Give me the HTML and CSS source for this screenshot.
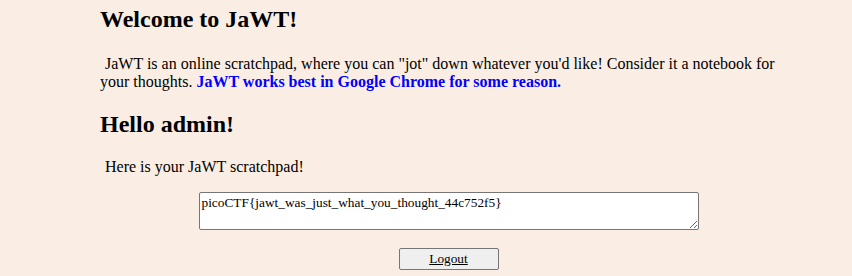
FILE: index.html
```html
<!DOCTYPE html>
<html>
<head>
<meta charset="utf-8">
<title>JaWT</title>
<link rel="stylesheet" href="styles.css">
</head>
<body>
<div class="page">
  <h2 class="title title-first">Welcome to JaWT!</h2>
  <p class="intro">&nbsp;JaWT is an online scratchpad, where you can "jot" down whatever you'd like! Consider it a notebook for your thoughts. <span class="hint">JaWT works best in Google Chrome for some reason.</span></p>
  <h2 class="title">Hello admin!</h2>
  <p class="intro">&nbsp;Here is your JaWT scratchpad!</p>
  <form class="pad">
    <textarea class="scratch">picoCTF{jawt_was_just_what_you_thought_44c752f5}</textarea>
    <button type="button" class="logout"><u>Logout</u></button>
  </form>
</div>
</body>
</html>
```
FILE: styles.css
```css
html, body {
  margin: 0;
  padding: 0;
  background: #faeee4;
}
body {
  font-family: "Liberation Serif", "Times New Roman", serif;
  color: #000;
}
.page {
  width: 697px;
  margin-left: 100px;
  padding-top: 6px;
}
.title {
  font-size: 24px;
  font-weight: bold;
  margin: 0 0 20px 0;
}
.title-first {
  margin-bottom: 22px;
}
.intro {
  font-size: 16px;
  margin: 0 0 20px 0;
  text-indent: 1px;
}
.hint {
  color: #0000ff;
  font-weight: bold;
}
.pad {
  display: flex;
  flex-direction: column;
  align-items: center;
  gap: 18px;
  margin-top: -4px;
}
.scratch {
  box-sizing: border-box;
  width: 500px;
  height: 38px;
  font-family: "Liberation Serif", "Times New Roman", serif;
  font-size: 13.333px;
  padding: 2px;
  border: 1px solid #767676;
  border-radius: 2px;
  background: #fff;
  margin: 0;
}
.logout {
  box-sizing: border-box;
  width: 100px;
  height: 22px;
  font-family: "Liberation Serif", "Times New Roman", serif;
  font-size: 13.333px;
  background: #efefef;
  border: 1px solid #767676;
  border-radius: 2px;
  color: #000;
  padding: 1px 6px;
  margin: 0;
}
```
